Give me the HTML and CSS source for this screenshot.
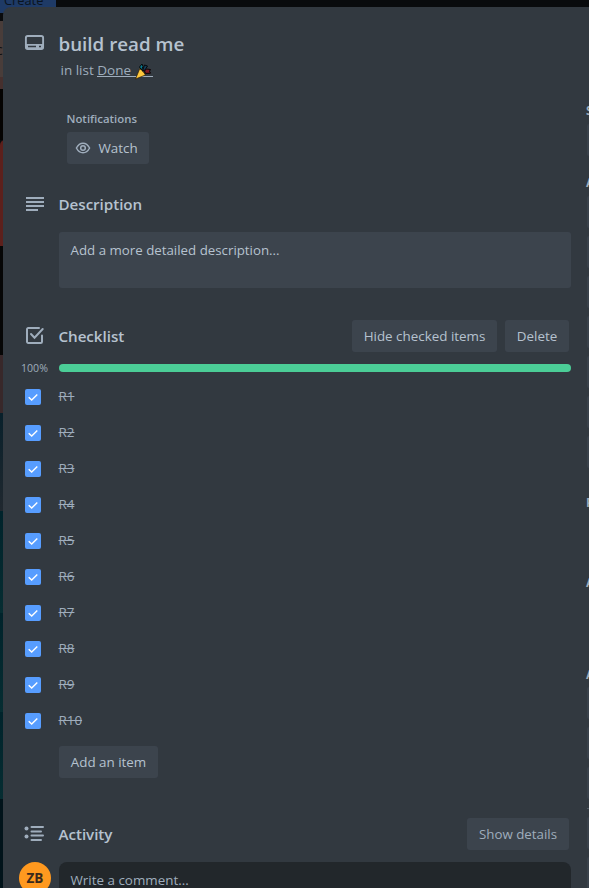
FILE: index.html
```html
<!DOCTYPE html>
<html lang="en">
<head>
<meta charset="utf-8">
<title>build read me</title>
<link rel="stylesheet" href="styles.css">
</head>
<body>
<div class="board">
  <div class="create">Create</div>
  <div class="strip gap"></div>
  <div class="strip brown">c</div>
  <div class="strip rust"></div>
  <div class="strip black"></div>
  <div class="strip red"></div>
  <div class="strip black-tall"></div>
  <div class="strip maroon"></div>
  <div class="strip slate"></div>
  <div class="strip teal t1"></div>
  <div class="strip teal t2"></div>
  <div class="strip teal t3"></div>
  <div class="strip night"></div>
</div>
<div class="modal">
  <main>
    <header class="row title-row">
      <svg class="icon" width="24" height="24" viewBox="0 0 24 24"><rect x="3.9" y="4" width="17.2" height="13" rx="1.8" fill="none" stroke="currentColor" stroke-width="1.9"/><path d="M4 12h17v5H4z" fill="currentColor"/><path d="M6 14.5h8M17 14.5h2" stroke="#323940" stroke-width="1.7"/></svg>
      <h1>build read me</h1>
    </header>
    <p class="in-list">in list <a>Done <svg width="18" height="17" viewBox="0 0 17 17"><path d="M1 16 5.3 5.5Q9 8 11 12Z" fill="#ffc83d" stroke="#291b08" stroke-width=".7"/><path d="M5 4 7.5 1l1 2.5L7 7z" fill="#087c92" stroke="#05080a"/><path d="m10 2 3 1-2.5 4L8 8z" fill="#153d59" stroke="#05080a"/><path d="m10 8 2-2 4 .5-1 1.7 1 2-5 .2z" fill="#801a24" stroke="#080405"/></svg></a></p>
    <section class="notifications">
      <h3>Notifications</h3>
      <button class="watch"><svg width="16" height="16" viewBox="0 0 16 16" fill="none" stroke="currentColor" stroke-width="1.5"><path d="M1.4 8C3 5 5 3.2 8 3.2S13 5 14.6 8C13 11 11 12.8 8 12.8S3 11 1.4 8Z"/><circle cx="8" cy="8" r="2.3"/></svg><span>Watch</span></button>
    </section>
    <div class="row desc-row">
      <svg class="icon" width="24" height="24" viewBox="0 0 24 24"><path d="M3 6h18M3 10h18M3 14h18M3 18h12" stroke="currentColor" stroke-width="2"/></svg>
      <h2>Description</h2>
    </div>
    <div class="description">Add a more detailed description...</div>
    <div class="row check-row">
      <svg class="icon" width="24" height="24" viewBox="0 0 24 24" fill="none" stroke="currentColor" stroke-width="2" stroke-linecap="round"><path d="M16 4H5.2A1.2 1.2 0 0 0 4 5.2v12.6A1.2 1.2 0 0 0 5.2 19h12.6a1.2 1.2 0 0 0 1.2-1.2V11.5"/><path d="m8 10 3.5 3.7 8.2-8.7"/></svg>
      <h2>Checklist</h2>
      <button class="hide">Hide checked items</button>
      <button class="delete">Delete</button>
    </div>
    <div class="progress"><span>100%</span><div class="bar"></div></div>
    <ul>
      <li><i><svg viewBox="0 0 16 16"><path d="m3.7 8.2 3 2.8 5.6-5.5"/></svg></i><s>R1</s></li>
      <li><i><svg viewBox="0 0 16 16"><path d="m3.7 8.2 3 2.8 5.6-5.5"/></svg></i><s>R2</s></li>
      <li><i><svg viewBox="0 0 16 16"><path d="m3.7 8.2 3 2.8 5.6-5.5"/></svg></i><s>R3</s></li>
      <li><i><svg viewBox="0 0 16 16"><path d="m3.7 8.2 3 2.8 5.6-5.5"/></svg></i><s>R4</s></li>
      <li><i><svg viewBox="0 0 16 16"><path d="m3.7 8.2 3 2.8 5.6-5.5"/></svg></i><s>R5</s></li>
      <li><i><svg viewBox="0 0 16 16"><path d="m3.7 8.2 3 2.8 5.6-5.5"/></svg></i><s>R6</s></li>
      <li><i><svg viewBox="0 0 16 16"><path d="m3.7 8.2 3 2.8 5.6-5.5"/></svg></i><s>R7</s></li>
      <li><i><svg viewBox="0 0 16 16"><path d="m3.7 8.2 3 2.8 5.6-5.5"/></svg></i><s>R8</s></li>
      <li><i><svg viewBox="0 0 16 16"><path d="m3.7 8.2 3 2.8 5.6-5.5"/></svg></i><s>R9</s></li>
      <li><i><svg viewBox="0 0 16 16"><path d="m3.7 8.2 3 2.8 5.6-5.5"/></svg></i><s>R10</s></li>
    </ul>
    <button class="add">Add an item</button>
    <div class="row activity-row">
      <svg class="icon" width="24" height="24" viewBox="0 0 24 24"><path d="M8.5 5H20M8.5 9.5H18M8.5 13.5H20M8.5 18H18" stroke="currentColor" stroke-width="2" stroke-linecap="round"/><circle cx="3.5" cy="6.5" r="2" fill="currentColor"/><circle cx="3.5" cy="14.5" r="2" fill="currentColor"/></svg>
      <h2>Activity</h2>
      <button class="details">Show details</button>
    </div>
    <div class="comment-row"><div class="avatar">ZB</div><div class="comment">Write a comment...</div></div>
  </main>
  <aside>
    <h4>S</h4>
    <div class="stack s1"><b></b></div>
    <h4>A</h4>
    <div class="stack s2"><b></b><b></b><b></b><b></b><b></b><b></b><b></b></div>
    <h4>P</h4>
    <div class="stack s3"></div>
    <h4>A</h4>
    <div class="stack s4"></div>
    <h4>A</h4>
    <div class="stack s5"><b></b><b></b><b></b></div>
    <hr>
    <div class="stack s6"><b></b><b></b></div>
  </aside>
</div>
</body>
</html>
```
FILE: styles.css
```css
* { box-sizing: border-box; }
html, body { margin: 0; height: 888px; overflow: hidden; }
body { position: relative; background: #090b0d; color: #b6c2cf; font: 14px/20px "Open Sans", "Noto Sans", sans-serif; }
h1, h2, h3, h4, p, ul { margin: 0; padding: 0; }
.board { position: absolute; inset: 0; overflow: hidden; }
.create { width: 56px; height: 13px; background: #1e3a66; color: #0a1420; font-size: 12.8px; line-height: 0; padding-left: 4px; }
.strip { width: 8px; }
.gap { height: 8px; }
.brown { height: 56px; background: #493d3a; color: #111; line-height: 58px; text-indent: -4px; }
.rust { height: 12px; background: #46302e; }
.black { height: 51px; background: #040302; }
.red { height: 106px; background: #5c201c; border-top-left-radius: 5px; }
.black-tall { height: 109px; background: #060606; }
.maroon { height: 58px; background: #38282a; }
.slate { height: 98px; background: linear-gradient(#08202b, #20282f); }
.teal { background: linear-gradient(#00232b, #062d32); }
.t1 { height: 102px; }
.t2 { height: 99px; }
.t3 { height: 87px; }
.night { height: 89px; background: #01131a; }
.modal { position: relative; display: grid; grid-template-columns: 568px 2px; column-gap: 16px; width: 586px; height: 881px; margin: 7px 0 0 3px; background: #323940; border-radius: 8px 0 0 0; overflow: hidden; }
main { padding-left: 18px; }
.row { display: flex; align-items: center; height: 32px; }
.icon { flex: none; width: 24px; height: 24px; margin: 0 12.5px 0 1px; color: #9fadbc; }
.desc-row .icon, .check-row .icon, .activity-row .icon { margin: 0 11.5px 0 2px; }
h1 { font-size: 18.8px; line-height: 24px; font-weight: 600; }
h2 { font-size: 15.2px; line-height: 20px; font-weight: 600; letter-spacing: -.05px; margin-right: auto; }
.title-row { margin-top: 21px; }
.in-list { height: 20px; margin: 0 0 0 39.5px; color: #9fadbc; font-size: 13.5px; }
.in-list a { display: inline-block; height: 17px; line-height: 20px; border-bottom: 1px solid #9fadbc; }
.in-list svg { vertical-align: -5px; margin-left: -1px; margin-right: 1px; }
.notifications { margin: 28px 0 0 45.5px; padding-top: 1px; }
h3 { font-size: 11.4px; line-height: 20px; font-weight: 600; color: #9fadbc; margin-bottom: 3px; }
button { display: flex; align-items: center; justify-content: center; flex: none; height: 32px; border: 0; border-radius: 3px; padding: 0; background: #3c444d; color: #b6c2cf; font: 13.4px/20px "Open Sans", "Noto Sans", sans-serif; white-space: nowrap; }
.watch { width: 82px; margin-left: .5px; padding-left: 8px; gap: 7.5px; justify-content: flex-start; }
.watch svg { color: #9fadbc; }
.desc-row { margin-top: 24px; }
.description { height: 56px; margin: 12px 0 0 38px; padding: 8px 11.5px; border-radius: 3px; background: #3c444d; font-size: 13.3px; }
.check-row { margin-top: 32px; padding-right: 2px; }
.hide { width: 145px; margin-right: 8px; }
.delete { width: 64px; }
.progress { display: flex; align-items: center; height: 16px; margin-top: 8px; }
.progress span { width: 38px; color: #9fadbc; font-size: 10.6px; }
.bar { width: 512px; height: 8px; border-radius: 4px; background: #4bce97; }
ul { list-style: none; margin-top: 2px; }
li { display: flex; align-items: center; height: 36px; padding-left: 4px; }
li i { width: 16px; height: 16px; margin: 1px 17.5px 0 0; border-radius: 2px; background: #579dff; }
li svg { display: block; width: 16px; height: 16px; fill: none; stroke: #fff; stroke-width: 1.4; }
li s { color: #9fadbc; font-size: 13.4px; }
.add { width: 99px; margin: 8px 0 0 38px; }
.activity-row { margin-top: 40px; padding-right: 2px; }
.details { width: 102px; color: #9fadbc; font-size: 13.3px; }
.comment-row { display: flex; margin: 12px 0 0 -2px; }
.avatar { width: 32px; height: 32px; border-radius: 50%; margin-right: 8px; background: #ff991f; color: #3a2a1c; font-size: 13.5px; line-height: 32px; font-weight: 700; text-align: center; }
.comment { flex: 1; height: 40px; border-radius: 8px; background: #22272b; padding: 8px 11.5px; color: #9fadbc; font-size: 13.4px; }
aside { padding-top: 94px; }
h4 { height: 20px; font-size: 12px; line-height: 20px; font-weight: 700; color: #9fadbc; margin-left: -1px; }
.stack { display: flex; flex-direction: column; gap: 8px; }
.stack b { height: 32px; border-radius: 3px 0 0 3px; background: #3a424b; }
.s1 { padding-top: 3px; height: 52px; }
.s2 { padding-top: 3px; height: 300px; }
.s3 { height: 60px; }
.s4 { height: 72px; }
.s5 { padding-top: 2px; }
hr { height: 1px; border: 0; margin: 9px 0 8px; background: #505a64; }
```
